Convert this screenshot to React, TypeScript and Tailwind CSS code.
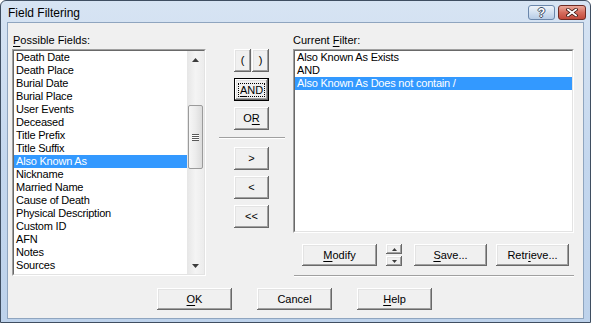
import type { ReactNode } from "react";

const raised =
  "shadow-[inset_-1px_-1px_#696969,inset_1px_1px_#ffffff,inset_-2px_-2px_#a0a0a0,inset_2px_2px_#e3e3e3]";
const defaultBtn =
  "shadow-[inset_0_0_0_1px_#000000,inset_-2px_-2px_#696969,inset_2px_2px_#ffffff,inset_-3px_-3px_#a0a0a0,inset_3px_3px_#e3e3e3]";

function Btn({ children, className = "", def = false }: { children: ReactNode; className?: string; def?: boolean }) {
  return (
    <div
      className={`flex shrink-0 items-center justify-center bg-[#f0f0f0] text-[11px] leading-[13px] text-black ${def ? defaultBtn : raised} ${className}`}
    >
      {children}
    </div>
  );
}

function U({ children }: { children: ReactNode }) {
  return <span className="underline decoration-1 underline-offset-[2px]">{children}</span>;
}

function Arrow({ down = false, w = 7, h = 4 }: { down?: boolean; w?: number; h?: number }) {
  return (
    <svg width={w} height={h} viewBox={`0 0 ${w} ${h}`}>
      <polygon points={down ? `0,0 ${w},0 ${w / 2},${h}` : `0,${h} ${w},${h} ${w / 2},0`} fill="#3c3c3c" />
    </svg>
  );
}

function ListBox({ className, children }: { className: string; children: ReactNode }) {
  return (
    <div className={`border-t border-l border-t-[#a0a0a0] border-l-[#a0a0a0] border-r border-b border-r-white border-b-white ${className}`}>
      <div className="flex h-full w-full border-t border-l border-t-[#696969] border-l-[#696969] border-r border-b border-r-[#e3e3e3] border-b-[#e3e3e3] bg-white">
        {children}
      </div>
    </div>
  );
}

function Row({ text, selected = false }: { text: string; selected?: boolean }) {
  return (
    <div
      className={`h-[13px] shrink-0 whitespace-nowrap pl-[2px] text-[11px] leading-[13px] tracking-[-0.2px] ${
        selected ? "bg-[#3399ff] text-white" : "text-black"
      }`}
    >
      {text}
    </div>
  );
}

const fields = [
  "Death Date",
  "Death Place",
  "Burial Date",
  "Burial Place",
  "User Events",
  "Deceased",
  "Title Prefix",
  "Title Suffix",
  "Also Known As",
  "Nickname",
  "Married Name",
  "Cause of Death",
  "Physical Description",
  "Custom ID",
  "AFN",
  "Notes",
  "Sources",
  "Attachments",
];

function Separator({ className }: { className: string }) {
  return (
    <div className={className}>
      <div className="h-px bg-[#a0a0a0]" />
      <div className="h-px bg-white" />
    </div>
  );
}

export default function App() {
  return (
    <div className="h-[323px] w-[591px] bg-white [font-family:'Liberation_Sans',Arial,sans-serif]">
      <div className="flex h-full w-full flex-col overflow-hidden rounded-t-[6px] border border-[#3f4e61] bg-gradient-to-b from-[#d7e4f3] via-[#c4d7ee] to-[#bdd2eb]">
        {/* title bar */}
        <div className="flex h-[21px] shrink-0 items-start">
          <div className="pl-[7px] pt-[5px] text-[12px] leading-[14px] text-black">Field Filtering</div>
          <div className="ml-auto mr-[4px] mt-[4px] flex gap-[3px]">
            <div className="flex h-[15px] w-[27px] items-center justify-center rounded-[3px] border border-[#6b87ab] bg-gradient-to-b from-[#eef3fa] via-[#d3e1f1] to-[#b7cce6]">
              <span className="text-[12px] font-bold leading-[12px] text-white [text-shadow:1px_0_#3c4d64,-1px_0_#3c4d64,0_1px_#3c4d64,0_-1px_#3c4d64]">
                ?
              </span>
            </div>
            <div className="flex h-[15px] w-[28px] items-center justify-center rounded-[3px] border border-[#6e2b24] bg-gradient-to-b from-[#eaa99c] via-[#d56d5e] to-[#c2493b]">
              <svg width="12" height="9" viewBox="0 0 12 9">
                <path d="M2 1.5 L10 7.5 M10 1.5 L2 7.5" stroke="#3a1510" strokeWidth="3.4" strokeLinecap="square" />
                <path d="M2 1.5 L10 7.5 M10 1.5 L2 7.5" stroke="#ffffff" strokeWidth="1.8" strokeLinecap="square" />
              </svg>
            </div>
          </div>
        </div>

        {/* client area */}
        <div className="flex flex-1 flex-col px-[6px] pb-[3px]">
          <div className="flex flex-1 flex-col border border-[#8fa5bf] bg-[#f0f0f0]">
            <div className="flex pt-[11px]">
              {/* left column */}
              <div className="flex flex-col pl-[4px]">
                <div className="ml-[1px] h-[13px] text-[11px] leading-[13px] text-black">
                  <U>P</U>ossible Fields:
                </div>
                <ListBox className="mt-[2px] h-[227px] w-[194px]">
                  <div className="flex flex-1 flex-col overflow-hidden">
                    {fields.map((f) => (
                      <Row key={f} text={f} selected={f === "Also Known As"} />
                    ))}
                  </div>
                  <div className="flex w-[17px] shrink-0 flex-col bg-gradient-to-r from-[#e6e6e6] via-[#f4f4f4] to-[#ececec]">
                    <div className="flex h-[17px] items-center justify-center">
                      <Arrow />
                    </div>
                    <div className="flex-1 pl-[1px] pr-[1px] pt-[37px]">
                      <div className="flex h-[64px] items-center justify-center rounded-[2px] border border-[#9b9b9b] bg-gradient-to-r from-[#f6f6f6] via-[#ececec] to-[#dcdcdc]">
                        <div className="flex w-[7px] flex-col">
                          <div className="h-px bg-[#595959]" />
                          <div className="h-px bg-white" />
                          <div className="h-px bg-[#595959]" />
                          <div className="h-px bg-white" />
                          <div className="h-px bg-[#595959]" />
                          <div className="h-px bg-white" />
                          <div className="h-px bg-[#595959]" />
                        </div>
                      </div>
                    </div>
                    <div className="flex h-[17px] items-center justify-center">
                      <Arrow down />
                    </div>
                  </div>
                </ListBox>
              </div>

              {/* middle column */}
              <div className="ml-[13px] flex w-[66px] flex-col pt-[15px]">
                <div className="ml-[15px] flex gap-[1px]">
                  <Btn className="h-[23px] w-[17px]">(</Btn>
                  <Btn className="h-[23px] w-[17px]">)</Btn>
                </div>
                <Btn def className="ml-[15px] mt-[6px] h-[23px] w-[35px]">
                  <span className="border border-dotted border-black px-[1px] leading-[12px]">
                    <U>A</U>ND
                  </span>
                </Btn>
                <Btn className="ml-[15px] mt-[6px] h-[23px] w-[35px]">
                  O<U>R</U>
                </Btn>
                <Separator className="mt-[7px] w-[66px]" />
                <Btn className="ml-[15px] mt-[8px] h-[23px] w-[35px]">&gt;</Btn>
                <Btn className="ml-[15px] mt-[6px] h-[23px] w-[35px]">&lt;</Btn>
                <Btn className="ml-[15px] mt-[6px] h-[23px] w-[35px]">&lt;&lt;</Btn>
              </div>

              {/* right column */}
              <div className="ml-[8px] flex flex-col">
                <div className="h-[13px] text-[11px] leading-[13px] text-black">
                  Current <U>F</U>ilter:
                </div>
                <ListBox className="mt-[2px] h-[184px] w-[281px]">
                  <div className="flex flex-1 flex-col overflow-hidden">
                    <Row text="Also Known As Exists" />
                    <Row text="AND" />
                    <Row text="Also Known As Does not contain /" selected />
                  </div>
                </ListBox>
                <div className="mt-[11px] flex items-start">
                  <Btn className="ml-[9px] h-[22px] w-[75px]">
                    <U>M</U>odify
                  </Btn>
                  <div className="ml-[9px] flex flex-col gap-[2px]">
                    <Btn className="h-[10px] w-[16px]">
                      <Arrow w={5} h={3} />
                    </Btn>
                    <Btn className="h-[10px] w-[16px]">
                      <Arrow down w={5} h={3} />
                    </Btn>
                  </div>
                  <Btn className="ml-[12px] h-[22px] w-[73px]">
                    <U>S</U>ave...
                  </Btn>
                  <Btn className="ml-[9px] h-[22px] w-[73px]">
                    Retr<U>i</U>eve...
                  </Btn>
                </div>
                <Separator className="ml-[1px] mt-[9px] w-[280px]" />
              </div>
            </div>

            {/* bottom buttons */}
            <div className="mt-[11px] flex gap-[25px] pl-[149px]">
              <Btn className="h-[22px] w-[75px]">
                <U>O</U>K
              </Btn>
              <Btn className="h-[22px] w-[75px]">Cancel</Btn>
              <Btn className="h-[22px] w-[75px]">
                <U>H</U>elp
              </Btn>
            </div>
          </div>
        </div>
      </div>
    </div>
  );
}
